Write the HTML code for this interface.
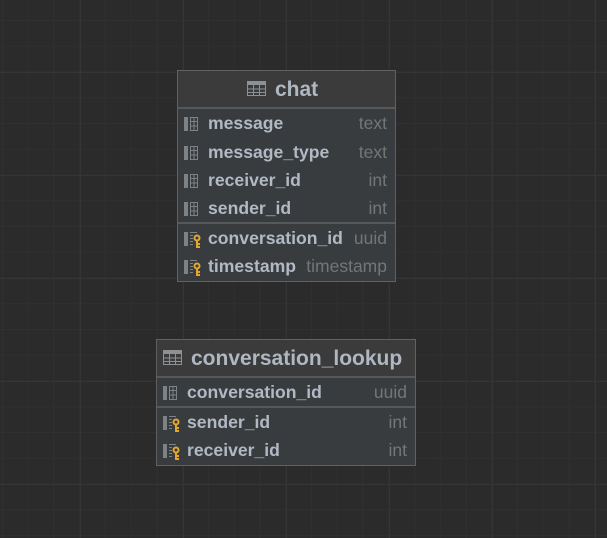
<!DOCTYPE html>
<html><head><meta charset="utf-8"><style>
html,body{margin:0;padding:0}
body{width:607px;height:538px;overflow:hidden;position:relative;background-color:#2b2b2b;
background-image:
linear-gradient(to right,#353535 1px,transparent 1px),
linear-gradient(to bottom,#353535 1px,transparent 1px),
linear-gradient(to right,#303030 1px,transparent 1px),
linear-gradient(to bottom,#303030 1px,transparent 1px);
background-size:103px 103px,103px 103px,25.75px 25.75px,25.75px 25.75px;
background-position:80px 0,0 72px,2px 0,0 20px;
font-family:"Liberation Sans",sans-serif}
.t{position:absolute;border:1px solid #5f6163;background:#393c3f}
.h{position:absolute;left:0;right:0;top:0;background:#3b3b3b;border-bottom:2px solid #56595c}
.ht{position:absolute;top:0;font-weight:bold;font-size:21px;color:#aeb7c2;white-space:nowrap}
.r{position:absolute;left:0;right:0;height:28px}
.n{position:absolute;font-weight:bold;font-size:17.6px;color:#b0b9c4;top:3px;white-space:nowrap}
.ty{position:absolute;right:8px;font-size:17.5px;color:#747676;top:3px}
.sep{position:absolute;left:0;right:0;height:2px;background:#56595c}
svg{position:absolute}
</style></head><body>
<svg width="0" height="0" style="position:absolute">
<defs>
<g id="col"><rect x="0" y="0" width="4" height="14" fill="#7d8287"/><rect x="6.5" y="0.5" width="7" height="13" fill="none" stroke="#7d8287"/><path d="M7 4.5h6M7 9h6M10 1v12" stroke="#7d8287"/></g>
<g id="key"><rect x="0" y="0" width="4" height="14" fill="#7d8287"/><path d="M6 0.5h7M6 3.5h3M6 6.5h3M6 9.5h3M6 12.5h3" stroke="#7d8287"/><circle cx="13" cy="6" r="2.5" fill="none" stroke="#e4a72e" stroke-width="2"/><path d="M13 8v8M13 12h3M13 15h3" stroke="#e4a72e" stroke-width="2"/></g>
<g id="tbl"><rect x="0.5" y="0.5" width="18" height="14" fill="none" stroke="#8c9196"/><rect x="0" y="0" width="19" height="4" fill="#8c9196"/><path d="M1 8h17M1 11.5h17M6.5 4v10M12.5 4v10" stroke="#8c9196"/></g>
</defs></svg>

<div class="t" style="left:177px;top:70px;width:217px;height:210px">
 <div class="h" style="height:36px"></div>
 <svg style="left:69px;top:10px" width="20" height="16"><use href="#tbl"/></svg>
 <div class="ht" style="left:97px;top:7px">chat</div>
 <div class="r" style="top:39px"><svg style="left:6px;top:7px" width="16" height="16"><use href="#col"/></svg><div class="n" style="left:30px">message</div><div class="ty">text</div></div>
 <div class="r" style="top:68px"><svg style="left:6px;top:7px" width="16" height="16"><use href="#col"/></svg><div class="n" style="left:30px">message_type</div><div class="ty">text</div></div>
 <div class="r" style="top:96px"><svg style="left:6px;top:7px" width="16" height="16"><use href="#col"/></svg><div class="n" style="left:30px">receiver_id</div><div class="ty">int</div></div>
 <div class="r" style="top:124px"><svg style="left:6px;top:7px" width="16" height="16"><use href="#col"/></svg><div class="n" style="left:30px">sender_id</div><div class="ty">int</div></div>
 <div class="sep" style="top:151px"></div>
 <div class="r" style="top:154px"><svg style="left:6px;top:7px" width="18" height="19"><use href="#key"/></svg><div class="n" style="left:30px">conversation_id</div><div class="ty">uuid</div></div>
 <div class="r" style="top:182px"><svg style="left:6px;top:7px" width="18" height="19"><use href="#key"/></svg><div class="n" style="left:30px">timestamp</div><div class="ty">timestamp</div></div>
</div>

<div class="t" style="left:156px;top:339px;width:258px;height:125px">
 <div class="h" style="height:36px"></div>
 <svg style="left:6px;top:10px" width="20" height="16"><use href="#tbl"/></svg>
 <div class="ht" style="left:34px;top:7px">conversation_lookup</div>
 <div class="r" style="top:39px"><svg style="left:6px;top:7px" width="16" height="16"><use href="#col"/></svg><div class="n" style="left:30px">conversation_id</div><div class="ty">uuid</div></div>
 <div class="sep" style="top:66px"></div>
 <div class="r" style="top:69px"><svg style="left:6px;top:7px" width="18" height="19"><use href="#key"/></svg><div class="n" style="left:30px">sender_id</div><div class="ty">int</div></div>
 <div class="r" style="top:97px"><svg style="left:6px;top:7px" width="18" height="19"><use href="#key"/></svg><div class="n" style="left:30px">receiver_id</div><div class="ty">int</div></div>
</div>
</body></html>
